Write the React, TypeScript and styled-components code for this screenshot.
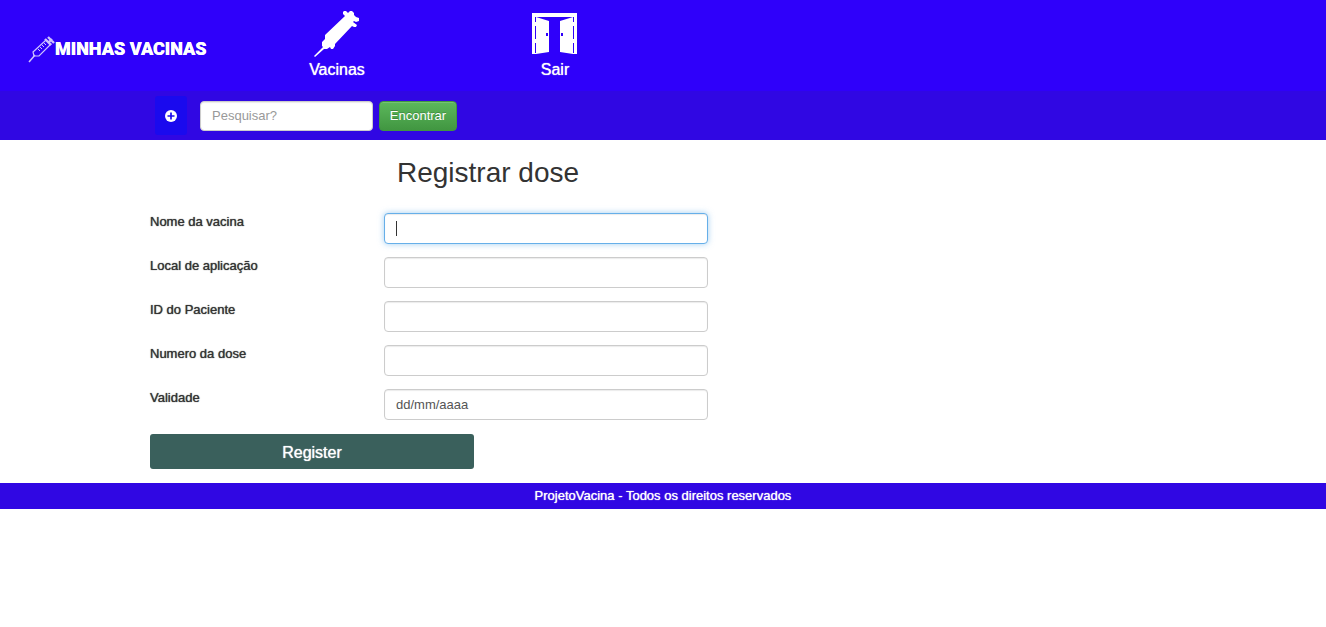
import React from "react";
import styled, { createGlobalStyle } from "styled-components";

const GlobalStyle = createGlobalStyle`
  *, *::before, *::after { box-sizing: border-box; }
  body {
    margin: 0;
    background: #fff;
    color: #333;
    font-family: "Liberation Sans", Arial, sans-serif;
    font-size: 13px;
    line-height: 18px;
  }
  button, input { font-family: inherit; font-size: 13px; }
`;

const Header = styled.header`
  display: flex;
  align-items: flex-start;
  height: 91px;
  padding-left: 28px;
  background: #2f00fa;
`;

const Brand = styled.a`
  display: flex;
  align-items: center;
  width: 280px;
  padding-top: 34px;
  color: #fff;
  font-family: Roboto, sans-serif;
  font-size: 18px;
  font-weight: 900;
  line-height: 30px;
  white-space: nowrap;
  text-decoration: none;
  text-shadow: 0 0 0 #fff;
`;

const Nav = styled.nav`
  display: flex;
  gap: 160px;
  padding-top: 10px;
`;

const NavLink = styled.a`
  display: flex;
  flex-direction: column;
  align-items: center;
  width: 58px;
  color: #fff;
  font-size: 16px;
  line-height: 24px;
  text-decoration: none;
  text-shadow: 0 0 1px #fff;
`;

const Toolbar = styled.form`
  display: flex;
  align-items: center;
  height: 49px;
  padding-left: 155px;
  background: #3007e3;
`;

const AddButton = styled.button`
  display: flex;
  align-items: center;
  justify-content: center;
  width: 32px;
  height: 39px;
  margin-right: 13px;
  padding: 0;
  border: 0;
  border-radius: 3px;
  background: #1a0aee;
`;

const TextInput = styled.input`
  width: 100%;
  height: 31px;
  padding: 4px 11px;
  border: 1px solid #ccc;
  border-radius: 4px;
  background: #fff;
  color: #555;
  box-shadow: inset 0 1px 1px rgba(0, 0, 0, 0.08);
  outline: 0;

  &::placeholder { color: #555; opacity: 1; }
  &:focus {
    border-color: #66afe9;
    caret-color: transparent;
    box-shadow: inset 0 1px 1px rgba(0, 0, 0, 0.08), 0 0 6px rgba(102, 175, 233, 0.6);
  }
`;

const SearchInput = styled(TextInput)`
  width: 173px;
  height: 30px;
  margin-right: 6px;
  &::placeholder { color: #999; }
`;

const FindButton = styled.button`
  width: 78px;
  height: 30px;
  padding: 0;
  border: 1px solid #419641;
  border-radius: 4px;
  background: linear-gradient(#5cb85c, #419641);
  color: #fff;
  text-shadow: 0 -1px 0 rgba(0, 0, 0, 0.2);
  box-shadow: inset 0 1px 0 rgba(255, 255, 255, 0.15);
`;

const Main = styled.main`
  padding: 15px 20px 14px 150px;
`;

const Form = styled.form`
  display: flex;
  flex-direction: column;
  gap: 14px;
  max-width: 558px;
`;

const Title = styled.h1`
  margin: 0 0 8px 247px;
  font-size: 28px;
  font-weight: 400;
  line-height: 36px;
  white-space: nowrap;
`;

const Fields = styled.div`
  display: flex;
  flex-direction: column;
  gap: 13px;
`;

const Field = styled.div`
  display: grid;
  grid-template-columns: 234px 1fr;
`;

const Label = styled.label`
  text-shadow: 0 0 1px #333;
`;

const InputWrap = styled.div`
  position: relative;
`;

const Caret = styled.span`
  position: absolute;
  top: 8px;
  left: 12px;
  width: 1px;
  height: 15px;
  background: #333;
  pointer-events: none;
  visibility: hidden;

  input:focus + & { visibility: visible; }
`;

const SubmitButton = styled.button`
  width: 324px;
  height: 35px;
  padding: 2px 0 0;
  border: 0;
  border-radius: 3px;
  background: #3a605c;
  color: #fff;
  text-shadow: 0 0 1px #fff;
  && { font-size: 16px; }
`;

const Footer = styled.footer`
  padding: 4px;
  background: #3007e3;
  color: #fff;
  text-align: center;
  text-shadow: 0 0 1px #fff;
`;

const LogoSyringe = () => (
  <svg width="27" height="28" viewBox="0 0 27 28" fill="none" stroke="#cdc2ff" aria-hidden="true">
    <path d="M1 27 7 20" strokeWidth="1.5" />
    <path d="m6 21-1-4L18 5l5 4L11 21l-5 0Z" strokeWidth="1.2" />
    <path d="m10 14 2 2m0-4 2 2m0-4 2 2m0-4 2 2" strokeWidth="1" />
    <path d="m17 4 6 6M21 7l3-3m-4-2 6 6" strokeWidth="2.4" />
  </svg>
);

const SyringeIcon = () => (
  <svg width="48" height="48" viewBox="0 0 48 48" fill="#fff" aria-hidden="true">
    <path d="M1 46 10 37 9 36V32L12 29V25L32 6 30 4V2L31 1H33L35 3 37 1H39L41 3 41 5 43 7 46 8V11L43 12 41 11 40 12 44 15 43 17H41L39 16 22 34V36L20 39H18L17 37 14 39H11L2 47Z" />
  </svg>
);

const DoorIcon = () => (
  <svg width="46" height="48" viewBox="0 0 46 48" aria-hidden="true">
    <path fill="#fff" d="M0 3h45v41h-4V7H4v37H0Z" />
    <path fill="#fff" d="m4 7 13 4v31L4 44ZM41 7l-13 4v31l13 2Z" />
    <path stroke="#2f00fa" d="M3.500 7v5m0 4v13m0 4v10M41.500 7v5m0 4v13m0 4v10" />
    <path fill="#2f00fa" d="M14 23h2v3h-2zM29 23h2v3h-2z" />
  </svg>
);

const PlusIcon = () => (
  <svg width="12" height="12" viewBox="0 0 12 12" aria-hidden="true">
    <circle cx="6" cy="6" r="6" fill="#fff" />
    <path d="M6 2.500v7M2.500 6h7" stroke="#1a0aee" strokeWidth="1.700" />
  </svg>
);

const fields = [
  { id: "nome", label: "Nome da vacina" },
  { id: "local", label: "Local de aplicação" },
  { id: "paciente", label: "ID do Paciente" },
  { id: "dose", label: "Numero da dose" },
  { id: "validade", label: "Validade", placeholder: "dd/mm/aaaa" },
];

export default function App() {
  return (
    <>
      <GlobalStyle />
      <Header>
        <Brand href="#"><LogoSyringe />MINHAS VACINAS</Brand>
        <Nav>
          <NavLink href="#vacinas"><SyringeIcon />Vacinas</NavLink>
          <NavLink href="#sair"><DoorIcon />Sair</NavLink>
        </Nav>
      </Header>
      <Toolbar role="search">
        <AddButton type="button" aria-label="Adicionar"><PlusIcon /></AddButton>
        <SearchInput placeholder="Pesquisar?" aria-label="Pesquisar" />
        <FindButton type="submit">Encontrar</FindButton>
      </Toolbar>
      <Main>
        <Form>
          <Title>Registrar dose</Title>
          <Fields>
            {fields.map((field, index) => (
              <Field key={field.id}>
                <Label htmlFor={field.id}>{field.label}</Label>
                <InputWrap>
                  <TextInput id={field.id} placeholder={field.placeholder} autoFocus={index === 0} />
                  {index === 0 && <Caret />}
                </InputWrap>
              </Field>
            ))}
          </Fields>
          <SubmitButton type="submit">Register</SubmitButton>
        </Form>
      </Main>
      <Footer>ProjetoVacina - Todos os direitos reservados</Footer>
    </>
  );
}
